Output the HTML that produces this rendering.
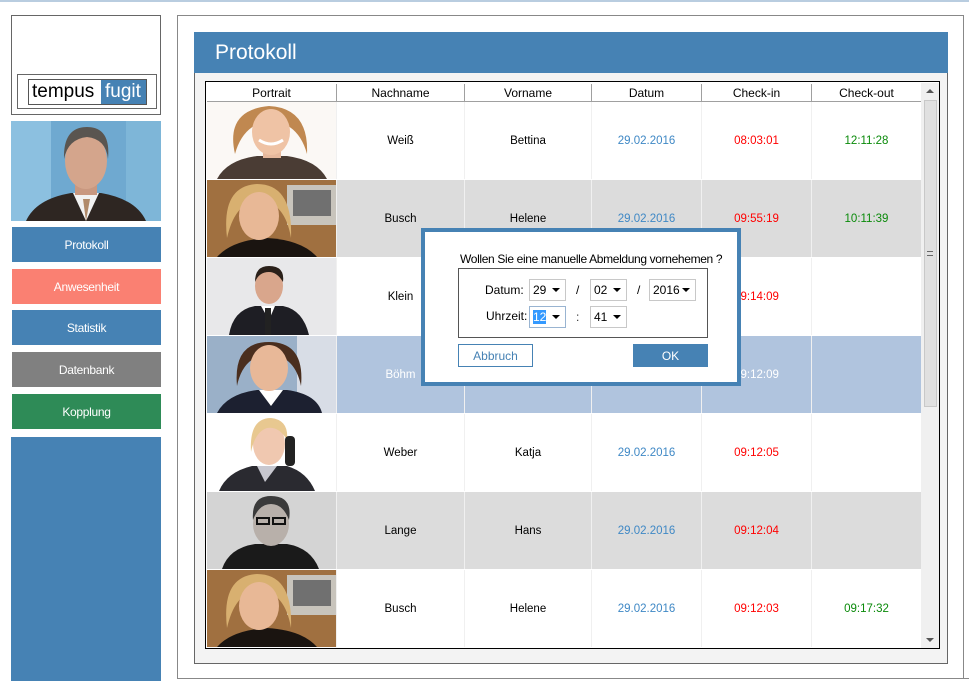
<!DOCTYPE html>
<html><head><meta charset="utf-8"><style>
*{margin:0;padding:0;box-sizing:border-box}
body{width:969px;height:693px;background:#fff;position:relative;overflow:hidden;font-family:"Liberation Sans",sans-serif;font-size:12px;color:#000}
.a{position:absolute}
.btn{position:absolute;left:12px;width:149px;height:35px;color:#fff;display:flex;align-items:center;justify-content:center;font-size:12px;letter-spacing:-.3px}
.row{position:absolute;left:207px;width:714px;height:77px;font-size:11.5px}
.c{position:absolute;top:0;height:77px;display:flex;align-items:center;justify-content:center;border-left:1px solid #f0f0f0}
.p{left:0;width:129px;border:none}
.n{left:129px;width:128px}.v{left:257px;width:127px}.d{left:384px;width:110px;color:#3f88c5}.i{left:494px;width:110px;color:#f00}.o{left:604px;width:110px;color:#0a8a0a}
.h{position:absolute;top:0;height:17px;display:flex;align-items:center;justify-content:center;font-size:12px;border-right:1px solid #a0a0a0}
.cb{position:absolute;height:22px;border:1px solid #c8c8c8;background:#fff;font-size:12px;padding-left:3px;line-height:20px;overflow:hidden}
.cb:after{content:"";position:absolute;right:5px;top:8px;border-left:4px solid transparent;border-right:4px solid transparent;border-top:4px solid #000}
</style></head><body>
<div class="a" style="left:0;top:0;width:969px;height:2px;background:#b9cde0"></div>
<div class="a" style="left:11px;top:15px;width:150px;height:100px;border:1px solid #666"></div>
<div class="a" style="left:17px;top:74px;width:140px;height:35px;border:1px solid #666"></div>
<div class="a" style="left:28px;top:79px;width:119px;height:26px;border:1px solid #555;background:#fff"></div>
<div class="a" style="left:101px;top:80px;width:45px;height:24px;background:#4682b4"></div>
<div class="a" style="left:32px;top:80px;font-size:19px;line-height:24px;color:#000">tempus</div>
<div class="a" style="left:105px;top:80px;font-size:19px;line-height:24px;color:#fff">fugit</div>
<svg class="a" style="left:11px;top:121px" width="150" height="100" viewBox="0 0 150 100">
<rect width="150" height="100" fill="#6fa9d0"/><rect x="0" y="0" width="40" height="100" fill="#8cc0e0"/><rect x="115" y="0" width="35" height="100" fill="#7eb6d8"/>
<path d="M15 100 Q25 78 60 72 L90 72 Q125 78 135 100Z" fill="#2e2622"/>
<path d="M62 72 L75 100 L88 72Z" fill="#f2f2f2"/><path d="M72 78 L75 100 L79 78Z" fill="#b08a6a"/>
<rect x="64" y="56" width="22" height="18" fill="#c99880"/>
<ellipse cx="75" cy="40" rx="21" ry="28" fill="#d4a58c"/>
<path d="M53 38 Q52 6 76 6 Q100 6 97 38 Q95 18 76 16 Q57 18 53 38Z" fill="#5a5550"/>
</svg>
<div class="btn" style="top:227px;background:#4682b4">Protokoll</div>
<div class="btn" style="top:269px;background:#fa8072">Anwesenheit</div>
<div class="btn" style="top:310px;background:#4682b4">Statistik</div>
<div class="btn" style="top:352px;background:#808080">Datenbank</div>
<div class="btn" style="top:394px;background:#2e8b57">Kopplung</div>
<div class="a" style="left:11px;top:437px;width:150px;height:244px;background:#4682b4"></div>
<div class="a" style="left:177px;top:15px;width:787px;height:664px;border:1px solid #888"></div>
<div class="a" style="left:180px;top:678px;width:789px;height:2px;border-top:1px solid #888"></div>
<div class="a" style="left:194px;top:32px;width:754px;height:632px;border:1px solid #666;background:#f3f3f3"></div>
<div class="a" style="left:194px;top:32px;width:754px;height:41px;background:#4682b4;color:#fff;font-size:21px;padding:9px 0 0 21px">Protokoll</div>
<div class="a" style="left:205px;top:81px;width:735px;height:568px;border:1px solid #000;background:#fff"></div>
<div class="a" style="left:207px;top:84px;width:714px;height:18px;border-bottom:1px solid #a0a0a0">
<div class="h" style="left:0;width:130px">Portrait</div><div class="h" style="left:130px;width:128px">Nachname</div><div class="h" style="left:258px;width:127px">Vorname</div><div class="h" style="left:385px;width:110px">Datum</div><div class="h" style="left:495px;width:110px">Check-in</div><div class="h" style="left:605px;width:109px;border:none">Check-out</div></div>
<div class="a" style="left:921px;top:83px;width:18px;height:565px;background:#f0f0f0"></div>
<div class="a" style="left:924px;top:100px;width:13px;height:307px;background:#e0e0e0;border:1px solid #c8c8c8"></div>
<div class="a" style="left:926px;top:89px;border-left:4px solid transparent;border-right:4px solid transparent;border-bottom:4px solid #555"></div>
<div class="a" style="left:926px;top:638px;border-left:4px solid transparent;border-right:4px solid transparent;border-top:4px solid #555"></div>
<div class="a" style="left:927px;top:251px;width:6px;height:5px;border-top:1px solid #666;border-bottom:1px solid #666"></div>

<div class="row" style="top:102px;background:#fff">
<svg class="c p" width="129" height="77"><rect width="129" height="77" fill="#fbf8f5"/><path d="M10 77 Q20 58 50 54 L80 54 Q110 58 120 77Z" fill="#4a3c34"/><rect x="56" y="42" width="18" height="14" fill="#e6b89c"/><path d="M28 52 Q18 8 62 4 Q102 6 100 52 Q92 22 64 18 Q36 22 28 52Z" fill="#c08850"/><ellipse cx="64" cy="30" rx="19" ry="23" fill="#efc3a5"/><path d="M52 38 Q64 46 76 38" stroke="#fff" stroke-width="3" fill="none"/></svg>
<div class="c n">Weiß</div><div class="c v">Bettina</div><div class="c d">29.02.2016</div><div class="c i">08:03:01</div><div class="c o">12:11:28</div></div>

<div class="row" style="top:180px;background:#dcdcdc">
<svg class="c p" width="129" height="77"><rect width="129" height="77" fill="#a07040"/><rect x="80" y="5" width="49" height="40" fill="#c8c4bc"/><rect x="86" y="10" width="38" height="26" fill="#707070"/><path d="M10 77 Q25 60 60 58 Q95 60 110 77Z" fill="#1a1410"/><path d="M20 58 Q14 6 50 4 Q86 4 84 58 Q78 22 52 20 Q28 22 20 58Z" fill="#d8b070"/><ellipse cx="52" cy="36" rx="20" ry="24" fill="#e8b896"/></svg>
<div class="c n">Busch</div><div class="c v">Helene</div><div class="c d">29.02.2016</div><div class="c i">09:55:19</div><div class="c o">10:11:39</div></div>

<div class="row" style="top:258px;background:#fff">
<svg class="c p" width="129" height="77"><rect width="129" height="77" fill="#e8e8ea"/><path d="M22 77 Q26 52 48 48 L76 48 Q96 52 102 77Z" fill="#1e1e24"/><path d="M54 48 L62 62 L68 48Z" fill="#fff"/><rect x="58" y="50" width="6" height="27" fill="#222"/><ellipse cx="62" cy="28" rx="14" ry="18" fill="#d9a68c"/><path d="M48 24 Q48 8 62 8 Q78 8 76 24 Q70 14 62 14 Q52 14 48 24Z" fill="#2a201a"/></svg>
<div class="c n">Klein</div><div class="c v"></div><div class="c d"></div><div class="c i">09:14:09</div><div class="c o"></div></div>

<div class="row" style="top:336px;background:#b0c4de;color:#fff">
<svg class="c p" width="129" height="77"><rect width="129" height="77" fill="#9ab0c8"/><rect x="90" y="0" width="39" height="77" fill="#d8dde6"/><path d="M10 77 Q20 58 50 54 L80 54 Q110 58 115 77Z" fill="#1c2030"/><path d="M52 54 L64 70 L76 54Z" fill="#fff"/><path d="M30 50 Q26 6 62 6 Q98 6 94 50 Q88 20 62 18 Q36 20 30 50Z" fill="#4a2e1e"/><ellipse cx="62" cy="32" rx="19" ry="23" fill="#e8b898"/></svg>
<div class="c n" style="color:#fff">Böhm</div><div class="c v"></div><div class="c d"></div><div class="c i" style="color:#fff">09:12:09</div><div class="c o"></div></div>

<div class="row" style="top:414px;background:#fff">
<svg class="c p" width="129" height="77"><rect width="129" height="77" fill="#fff"/><path d="M12 77 Q20 58 45 52 L80 52 Q100 58 108 77Z" fill="#2a2a30"/><path d="M50 52 L58 68 L70 52Z" fill="#c8c8d0"/><ellipse cx="62" cy="30" rx="16" ry="21" fill="#f0c8b0"/><path d="M44 38 Q42 4 64 4 Q82 6 80 26 Q72 12 60 14 Q48 18 44 38Z" fill="#e8c890"/><rect x="78" y="22" width="10" height="30" rx="4" fill="#222"/></svg>
<div class="c n">Weber</div><div class="c v">Katja</div><div class="c d">29.02.2016</div><div class="c i">09:12:05</div><div class="c o"></div></div>

<div class="row" style="top:492px;background:#dcdcdc">
<svg class="c p" width="129" height="77"><rect width="129" height="77" fill="#d4d4d4"/><path d="M15 77 Q22 56 48 52 L80 52 Q104 56 112 77Z" fill="#1a1a1a"/><ellipse cx="64" cy="32" rx="18" ry="22" fill="#b8b0aa"/><path d="M46 28 Q44 4 64 4 Q86 4 82 28 Q76 12 64 12 Q52 12 46 28Z" fill="#3a3a3a"/><rect x="50" y="26" width="12" height="6" fill="none" stroke="#111" stroke-width="2"/><rect x="66" y="26" width="12" height="6" fill="none" stroke="#111" stroke-width="2"/></svg>
<div class="c n">Lange</div><div class="c v">Hans</div><div class="c d">29.02.2016</div><div class="c i">09:12:04</div><div class="c o"></div></div>

<div class="row" style="top:570px;background:#fff">
<svg class="c p" width="129" height="77"><rect width="129" height="77" fill="#a07040"/><rect x="80" y="5" width="49" height="40" fill="#c8c4bc"/><rect x="86" y="10" width="38" height="26" fill="#707070"/><path d="M10 77 Q25 60 60 58 Q95 60 110 77Z" fill="#1a1410"/><path d="M20 58 Q14 6 50 4 Q86 4 84 58 Q78 22 52 20 Q28 22 20 58Z" fill="#d8b070"/><ellipse cx="52" cy="36" rx="20" ry="24" fill="#e8b896"/></svg>
<div class="c n">Busch</div><div class="c v">Helene</div><div class="c d">29.02.2016</div><div class="c i">09:12:03</div><div class="c o">09:17:32</div></div>

<div class="a" style="left:421px;top:228px;width:320px;height:158px;border:4px solid #4682b4;background:#fff"></div>
<div class="a" style="left:460px;top:252px;font-size:12px;letter-spacing:-.35px">Wollen Sie eine manuelle Abmeldung vornehemen ?</div>
<div class="a" style="left:458px;top:268px;width:250px;height:70px;border:1px solid #555"></div>
<div class="a" style="left:485px;top:283px;font-size:12px">Datum:</div>
<div class="a" style="left:486px;top:309px;font-size:12px">Uhrzeit:</div>
<div class="cb" style="left:529px;top:279px;width:37px">29</div>
<div class="a" style="left:576px;top:283px">/</div>
<div class="cb" style="left:590px;top:279px;width:37px">02</div>
<div class="a" style="left:637px;top:283px">/</div>
<div class="cb" style="left:649px;top:279px;width:47px">2016</div>
<div class="cb" style="left:529px;top:306px;width:37px;border-color:#99b4d1"><span style="background:#3399ff;color:#fff">12</span></div>
<div class="a" style="left:576px;top:310px;color:#333">:</div>
<div class="cb" style="left:590px;top:306px;width:37px">41</div>
<div class="a" style="left:458px;top:344px;width:75px;height:23px;border:1px solid #4682b4;color:#4682b4;display:flex;align-items:center;justify-content:center">Abbruch</div>
<div class="a" style="left:633px;top:344px;width:75px;height:23px;background:#4682b4;color:#fff;display:flex;align-items:center;justify-content:center">OK</div>
</body></html>
